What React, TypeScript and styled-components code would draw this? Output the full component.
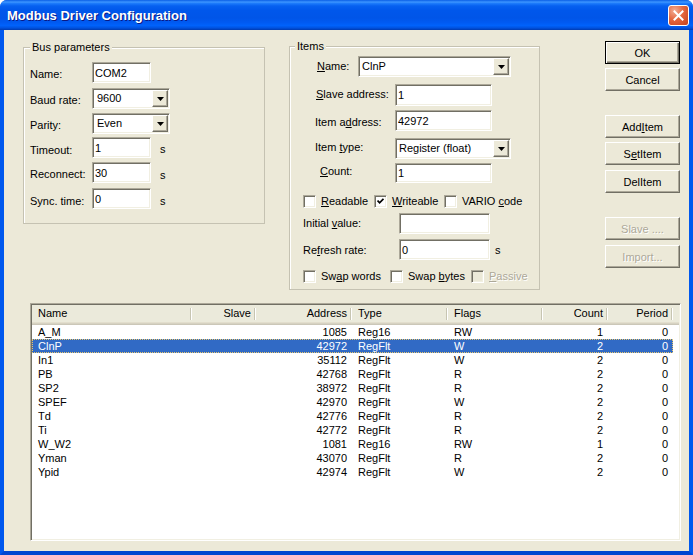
import React from "react";
import styled, { createGlobalStyle } from "styled-components";

const FONT = `"Liberation Sans", Arial, sans-serif`;

const GlobalStyle = createGlobalStyle`
  html, body { margin: 0; padding: 0; background: #ffffff; }
  body { font-family: ${FONT}; font-size: 11px; color: #000; }
  u { text-decoration-thickness: 1px; text-underline-offset: 1px; }
`;

// 목록 데이터
type Item = {
  name: string;
  slave: string;
  address: string;
  type: string;
  flags: string;
  count: string;
  period: string;
};

const items: Item[] = [
  { name: "A_M", slave: "", address: "1085", type: "Reg16", flags: "RW", count: "1", period: "0" },
  { name: "ClnP", slave: "", address: "42972", type: "RegFlt", flags: "W", count: "2", period: "0" },
  { name: "In1", slave: "", address: "35112", type: "RegFlt", flags: "W", count: "2", period: "0" },
  { name: "PB", slave: "", address: "42768", type: "RegFlt", flags: "R", count: "2", period: "0" },
  { name: "SP2", slave: "", address: "38972", type: "RegFlt", flags: "R", count: "2", period: "0" },
  { name: "SPEF", slave: "", address: "42970", type: "RegFlt", flags: "W", count: "2", period: "0" },
  { name: "Td", slave: "", address: "42776", type: "RegFlt", flags: "R", count: "2", period: "0" },
  { name: "Ti", slave: "", address: "42772", type: "RegFlt", flags: "R", count: "2", period: "0" },
  { name: "W_W2", slave: "", address: "1081", type: "Reg16", flags: "RW", count: "1", period: "0" },
  { name: "Yman", slave: "", address: "43070", type: "RegFlt", flags: "R", count: "2", period: "0" },
  { name: "Ypid", slave: "", address: "42974", type: "RegFlt", flags: "W", count: "2", period: "0" },
];

const columns: { key: keyof Item; title: string; w: number; right?: boolean }[] = [
  { key: "name", title: "Name", w: 160 },
  { key: "slave", title: "Slave", w: 64, right: true },
  { key: "address", title: "Address", w: 96, right: true },
  { key: "type", title: "Type", w: 96 },
  { key: "flags", title: "Flags", w: 95 },
  { key: "count", title: "Count", w: 65, right: true },
  { key: "period", title: "Period", w: 65, right: true },
];

const App = () => {
  return (
    <>
      <GlobalStyle />
      <Window>
        <TitleBar>
          <Title>Modbus Driver Configuration</Title>
          <CloseBtn>
            <svg width="11" height="11" viewBox="0 0 11 11">
              <path d="M1.5 1.5 L9.5 9.5 M9.5 1.5 L1.5 9.5" stroke="#fff" strokeWidth="2" strokeLinecap="square" />
            </svg>
          </CloseBtn>
        </TitleBar>

        <Frame>
          <TopRow>
            {/* Bus parameters */}
            <Group $w={242} $h={183} $pt={8} $pl={6}>
              <Legend $ml={0}>Bus parameters</Legend>
              <Row>
                <Label $w={62}>Name:</Label>
                <Field $w={59} readOnly value="COM2" />
              </Row>
              <Row $mt={5}>
                <Label $w={62}>Baud rate:</Label>
                <Combo $w={78} $pl={3} text="9600" />
              </Row>
              <Row $mt={4}>
                <Label $w={62}>Parity:</Label>
                <Combo $w={78} $pl={3} text="Even" />
              </Row>
              <Row $mt={3}>
                <Label $w={62} $mt={7}>Timeout:</Label>
                <Field $w={59} readOnly value="1" />
                <Unit>s</Unit>
              </Row>
              <Row $mt={4}>
                <Label $w={62}>Reconnect:</Label>
                <Field $w={59} readOnly value="30" />
                <Unit $mt={7}>s</Unit>
              </Row>
              <Row $mt={5}>
                <Label $w={62} $mt={7}>Sync. time:</Label>
                <Field $w={59} readOnly value="0" />
                <Unit $mt={7}>s</Unit>
              </Row>
            </Group>

            {/* Items */}
            <Group $w={251} $h={250} $pt={3} $pl={0} $ml={24} $top={-1}>
              <Legend $ml={5}>Items</Legend>
              <Row>
                <Label $pl={27} $w={68} $mt={4}>
                  <u>N</u>ame:
                </Label>
                <Combo $w={153} $pl={2} text="ClnP" />
              </Row>
              <Row $mt={7}>
                <Label $pl={26} $w={105} $mt={4}>
                  <u>S</u>lave address:
                </Label>
                <Field $w={97} $h={22} readOnly value="1" />
              </Row>
              <Row $mt={4}>
                <Label $pl={25} $w={105} $mt={6}>
                  Item a<u>d</u>dress:
                </Label>
                <Field $w={97} readOnly value="42972" />
              </Row>
              <Row $mt={7}>
                <Label $pl={25} $w={105} $mt={3}>
                  Item <u>t</u>ype:
                </Label>
                <Combo $w={116} $pl={2} text="Register (float)" />
              </Row>
              <Row $mt={4}>
                <Label $pl={30} $w={105} $mt={2}>
                  <u>C</u>ount:
                </Label>
                <Field $w={97} $h={20} readOnly value="1" />
              </Row>
              <CheckRow $mt={12}>
                <Check $w={71}>
                  <Box />
                  <span>
                    <u>R</u>eadable
                  </span>
                </Check>
                <Check $w={70}>
                  <Box $checked />
                  <span>
                    <u>W</u>riteable
                  </span>
                </Check>
                <Check>
                  <Box />
                  <span>
                    VARIO <u>c</u>ode
                  </span>
                </Check>
              </CheckRow>
              <Row $mt={5}>
                <Label $pl={13} $w={109} $mt={4}>
                  Initial <u>v</u>alue:
                </Label>
                <Field $w={91} readOnly value="" />
              </Row>
              <Row $mt={5}>
                <Label $pl={13} $w={109} $mt={5}>
                  Re<u>f</u>resh rate:
                </Label>
                <Field $w={91} readOnly value="0" />
                <Unit $ml={5} $mt={5}>
                  s
                </Unit>
              </Row>
              <CheckRow $mt={10}>
                <Check $w={87}>
                  <Box />
                  <span>
                    Sw<u>a</u>p words
                  </span>
                </Check>
                <Check $w={81}>
                  <Box />
                  <span>
                    Swap <u>b</u>ytes
                  </span>
                </Check>
                <Check $disabled>
                  <Box $disabled />
                  <span>
                    <u>P</u>assive
                  </span>
                </Check>
              </CheckRow>
            </Group>

            {/* 버튼 */}
            <ButtonColumn>
              <Btn $default>OK</Btn>
              <Btn $mt={4}>Cancel</Btn>
              <Btn $mt={24}>
                Add<u>I</u>tem
              </Btn>
              <Btn $mt={4}>
                S<u>e</u>tItem
              </Btn>
              <Btn $mt={5}>DelItem</Btn>
              <Btn $mt={24} disabled>
                Slave ....
              </Btn>
              <Btn $mt={5} disabled>
                Import...
              </Btn>
            </ButtonColumn>
          </TopRow>

          <ListBox>
            <HeaderRow>
              {columns.map((c) => (
                <HeadCell key={c.key} $w={c.w} $right={c.right}>
                  {c.title}
                </HeadCell>
              ))}
              <HeadFiller />
            </HeaderRow>
            {items.map((it, idx) => (
              <ListRow key={it.name} $selected={idx === 1}>
                {columns.map((c) => (
                  <Cell key={c.key} $w={c.w} $right={c.right}>
                    {it[c.key]}
                  </Cell>
                ))}
              </ListRow>
            ))}
          </ListBox>
        </Frame>
      </Window>
    </>
  );
};

const Combo = ({ $w, $pl, text }: { $w: number; $pl: number; text: string }) => {
  return (
    <ComboBox $w={$w}>
      <ComboText $pl={$pl}>{text}</ComboText>
      <DropBtn>
        <svg width="7" height="4" viewBox="0 0 7 4">
          <path d="M0 0 H7 L3.5 4 Z" fill="#000" />
        </svg>
      </DropBtn>
    </ComboBox>
  );
};

const Window = styled.div`
  width: 693px;
  height: 555px;
  display: flex;
  flex-direction: column;
  background: #0054e3;
  border-radius: 7px 7px 0 0;
  overflow: hidden;
`;

const TitleBar = styled.div`
  height: 30px;
  flex: none;
  display: flex;
  align-items: center;
  justify-content: space-between;
  padding: 0 4px 0 7px;
  background: linear-gradient(
    to bottom,
    #0a5fe6 0%,
    #3d95ff 7%,
    #1a78fa 12%,
    #0660f0 20%,
    #0057eb 35%,
    #0055e8 60%,
    #005af2 75%,
    #0062fb 85%,
    #0052e0 93%,
    #003ab0 100%
  );
`;

const Title = styled.span`
  color: #ffffff;
  font: bold 13px ${FONT};
  text-shadow: 1px 1px #0a1883;
`;

const CloseBtn = styled.div`
  width: 21px;
  height: 21px;
  box-sizing: border-box;
  border: 1px solid #ffffff;
  border-radius: 3px;
  background: radial-gradient(circle at 30% 25%, #f3ad95 0%, #e4673f 45%, #c4401b 100%);
  display: flex;
  align-items: center;
  justify-content: center;
`;

const Frame = styled.div`
  flex: 1;
  display: flex;
  flex-direction: column;
  background: #ece9d8;
  border-left: 4px solid #0058ee;
  border-right: 4px solid #0058ee;
  border-bottom: 4px solid #0046d0;
`;

const TopRow = styled.div`
  display: flex;
  align-items: flex-start;
  padding: 11px 0 0 19px;
`;

const Group = styled.fieldset<{
  $w: number;
  $h: number;
  $pt: number;
  $pl: number;
  $ml?: number;
  $top?: number;
}>`
  box-sizing: border-box;
  width: ${(p) => p.$w}px;
  height: ${(p) => p.$h}px;
  min-width: 0;
  margin: ${(p) => p.$top ?? 0}px 0 0 ${(p) => p.$ml ?? 0}px;
  padding: ${(p) => p.$pt}px 0 0 ${(p) => p.$pl}px;
  border: 1px solid #c5c2b2;
  box-shadow: inset 1px 1px #ffffff;
  display: flex;
  flex-direction: column;
`;

const Legend = styled.legend<{ $ml: number }>`
  margin-left: ${(p) => p.$ml}px;
  padding: 0 2px;
  line-height: 13px;
  background: #ece9d8;
`;

const Row = styled.div<{ $mt?: number }>`
  display: flex;
  align-items: flex-start;
  margin-top: ${(p) => p.$mt ?? 0}px;
`;

const Label = styled.div<{ $w: number; $pl?: number; $mt?: number }>`
  box-sizing: border-box;
  width: ${(p) => p.$w}px;
  padding-left: ${(p) => p.$pl ?? 0}px;
  margin-top: ${(p) => p.$mt ?? 6}px;
  line-height: 13px;
  white-space: nowrap;
`;

const Unit = styled.div<{ $ml?: number; $mt?: number }>`
  margin-left: ${(p) => p.$ml ?? 9}px;
  margin-top: ${(p) => p.$mt ?? 6}px;
  line-height: 13px;
`;

const Field = styled.input<{ $w: number; $h?: number }>`
  box-sizing: border-box;
  width: ${(p) => p.$w}px;
  height: ${(p) => p.$h ?? 21}px;
  margin: 0;
  padding: 0 2px;
  font: 11px ${FONT};
  color: #000;
  background: #ffffff;
  border: 1px solid;
  border-color: #aca899 #ffffff #ffffff #aca899;
  box-shadow: inset 1px 1px #716f64, inset -1px -1px #f1efe2;
  outline: none;
`;

const ComboBox = styled.div<{ $w: number }>`
  box-sizing: border-box;
  width: ${(p) => p.$w}px;
  height: 21px;
  display: flex;
  padding: 1px;
  background: #ffffff;
  border: 1px solid;
  border-color: #aca899 #ffffff #ffffff #aca899;
  box-shadow: inset 1px 1px #716f64, inset -1px -1px #f1efe2;
`;

const ComboText = styled.div<{ $pl: number }>`
  flex: 1;
  padding-left: ${(p) => p.$pl}px;
  line-height: 16px;
  white-space: nowrap;
  overflow: hidden;
`;

const DropBtn = styled.div`
  box-sizing: border-box;
  width: 16px;
  height: 17px;
  display: flex;
  align-items: center;
  justify-content: center;
  background: #ece9d8;
  border: 1px solid;
  border-color: #ffffff #716f64 #716f64 #ffffff;
  box-shadow: inset -1px -1px #aca899;
`;

const CheckRow = styled.div<{ $mt: number }>`
  display: flex;
  align-items: center;
  margin-top: ${(p) => p.$mt}px;
  padding-left: 13px;
`;

const Check = styled.div<{ $w?: number; $disabled?: boolean }>`
  display: flex;
  align-items: center;
  gap: 5px;
  width: ${(p) => (p.$w ? `${p.$w}px` : "auto")};
  flex: none;
  line-height: 13px;
  white-space: nowrap;
  color: ${(p) => (p.$disabled ? "#aca899" : "#000")};
  text-shadow: ${(p) => (p.$disabled ? "1px 1px #ffffff" : "none")};
`;

const BoxFrame = styled.div<{ $disabled?: boolean }>`
  box-sizing: border-box;
  width: 13px;
  height: 13px;
  flex: none;
  display: flex;
  align-items: center;
  justify-content: center;
  background: ${(p) => (p.$disabled ? "#ece9d8" : "#ffffff")};
  border: 1px solid;
  border-color: #aca899 #ffffff #ffffff #aca899;
  box-shadow: inset 1px 1px #716f64, inset -1px -1px #f1efe2;
`;

const Box = ({ $checked, $disabled }: { $checked?: boolean; $disabled?: boolean }) => (
  <BoxFrame $disabled={$disabled}>
    {$checked && (
      <svg width="7" height="7" viewBox="0 0 7 7">
        <path d="M0.5 2.5 L2.6 4.8 L6.5 0.8" stroke="#000" strokeWidth="1.8" fill="none" />
      </svg>
    )}
  </BoxFrame>
);

const ButtonColumn = styled.div`
  display: flex;
  flex-direction: column;
  margin-left: 65px;
`;

const Btn = styled.button<{ $mt?: number; $default?: boolean }>`
  box-sizing: border-box;
  width: 75px;
  height: 23px;
  margin: ${(p) => p.$mt ?? 0}px 0 0 0;
  padding: 0;
  font: 11px ${FONT};
  color: #000;
  background: #ece9d8;
  border: 1px solid;
  border-color: ${(p) => (p.$default ? "#000000" : "#ffffff #716f64 #716f64 #ffffff")};
  box-shadow: ${(p) =>
    p.$default
      ? "inset 1px 1px #ffffff, inset -1px -1px #716f64, inset -2px -2px #aca899"
      : "inset -1px -1px #aca899"};

  &:disabled {
    color: #aca899;
    text-shadow: 1px 1px #ffffff;
  }
`;

const ListBox = styled.div`
  box-sizing: border-box;
  width: 651px;
  height: 238px;
  margin: 13px 0 0 26px;
  padding: 1px;
  background: #ffffff;
  border: 1px solid;
  border-color: #aca899 #ffffff #ffffff #aca899;
  box-shadow: inset 1px 1px #716f64, inset -1px -1px #f1efe2;
  display: flex;
  flex-direction: column;
  overflow: hidden;
`;

const HeaderRow = styled.div`
  display: flex;
  height: 20px;
  flex: none;
  box-sizing: border-box;
  padding-bottom: 3px;
  background: #ebeadb;
  box-shadow: inset 0 -1px #cbc7b8, inset 0 -2px #d6d2c2, inset 0 -3px #e2decd;
`;

const HeadCell = styled.div<{ $w: number; $right?: boolean }>`
  box-sizing: border-box;
  width: ${(p) => p.$w}px;
  flex: none;
  padding: 0 5px 0 6px;
  line-height: 17px;
  text-align: ${(p) => (p.$right ? "right" : "left")};
  background:
    linear-gradient(#c7c5b2, #c7c5b2) right 1px top 3px / 1px 12px no-repeat,
    linear-gradient(#ffffff, #ffffff) right 0 top 3px / 1px 12px no-repeat;
`;

const HeadFiller = styled.div`
  flex: 1;
`;

const ListRow = styled.div<{ $selected?: boolean }>`
  display: flex;
  width: 641px;
  height: 14px;
  flex: none;
  line-height: 14px;
  color: ${(p) => (p.$selected ? "#ffffff" : "#000")};
  background: ${(p) => (p.$selected ? "#316ac5" : "transparent")};
  outline: ${(p) => (p.$selected ? "1px dotted #e8c76e" : "none")};
  outline-offset: -1px;
`;

const Cell = styled.div<{ $w: number; $right?: boolean }>`
  box-sizing: border-box;
  width: ${(p) => p.$w}px;
  flex: none;
  padding: 0 5px 0 6px;
  text-align: ${(p) => (p.$right ? "right" : "left")};
  white-space: nowrap;
`;

export default App;
